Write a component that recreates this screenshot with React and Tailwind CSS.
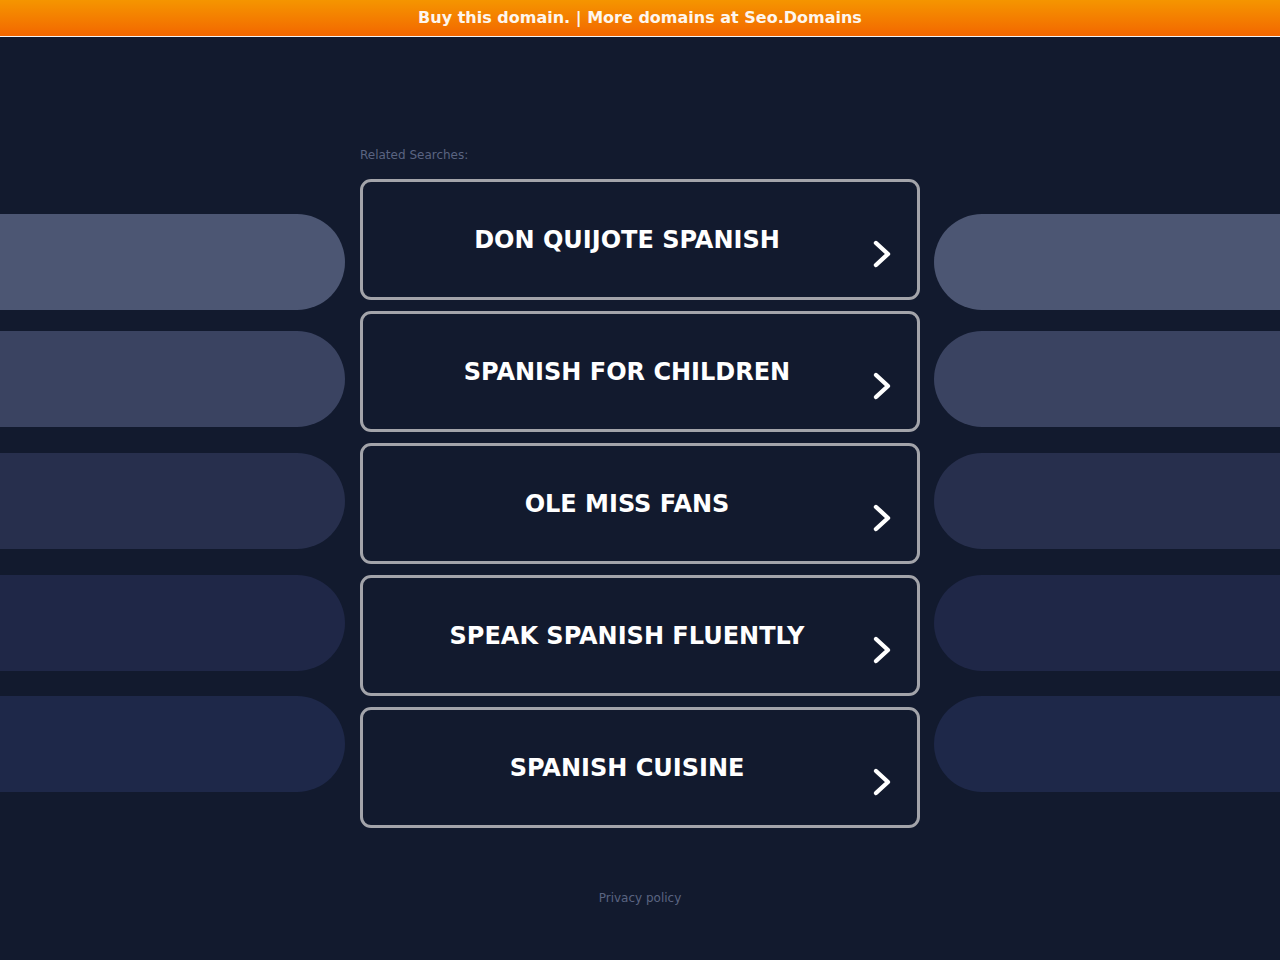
import React from "react";

const items = [
  "DON QUIJOTE SPANISH",
  "SPANISH FOR CHILDREN",
  "OLE MISS FANS",
  "SPEAK SPANISH FLUENTLY",
  "SPANISH CUISINE",
];

const pillColors = ["bg-[#4c5673]", "bg-[#3a4361]", "bg-[#272f4d]", "bg-[#1f2747]", "bg-[#1e2849]"];
const pillMargins = ["mt-[177px]", "mt-[21px]", "mt-[26px]", "mt-[26px]", "mt-[25px]"];

function Chevron() {
  return (
    <svg width="22" height="32" viewBox="0 0 22 32" className="absolute right-[24px] top-[56px]">
      <polyline points="5,5 17,16 5,27" fill="none" stroke="#ffffff" strokeWidth="4.4" strokeLinecap="round" strokeLinejoin="round" />
    </svg>
  );
}

export default function App() {
  return (
    <div className="min-h-[960px] bg-[#121a2e] font-['DejaVu_Sans',sans-serif]">
      <div className="h-[37px] border-b border-[#f3f3f3] bg-gradient-to-b from-[#f59500] to-[#f26600] flex items-center justify-center">
        <span className="font-bold text-[16px] leading-[20px] text-[#fdf6ee]">Buy this domain. | More domains at Seo.Domains</span>
      </div>
      <div className="flex">
        <div className="w-[345px] shrink-0 flex flex-col">
          {pillColors.map((c, i) => (
            <div key={i} className={`h-[96px] rounded-r-[48px] ${c} ${pillMargins[i]}`} />
          ))}
        </div>
        <div className="w-[560px] shrink-0 ml-[15px] flex flex-col">
          <div className="mt-[111px] text-[12px] leading-[14px] text-[#5a6481]">Related Searches:</div>
          <div className="mt-[17px] flex flex-col gap-[11px]">
            {items.map((t) => (
              <div key={t} className="relative h-[121px] rounded-[11px] border-[3px] border-[#a3a4aa] flex items-center">
                <div className="flex-1 pr-[26px] text-center text-white font-bold text-[24px] leading-[30px]">{t}</div>
                <Chevron />
              </div>
            ))}
          </div>
          <div className="mt-[63px] text-center text-[12px] leading-[14px] text-[#5a6481]">Privacy policy</div>
        </div>
        <div className="flex-1 ml-[14px] flex flex-col">
          {pillColors.map((c, i) => (
            <div key={i} className={`h-[96px] rounded-l-[48px] ${c} ${pillMargins[i]}`} />
          ))}
        </div>
      </div>
    </div>
  );
}
